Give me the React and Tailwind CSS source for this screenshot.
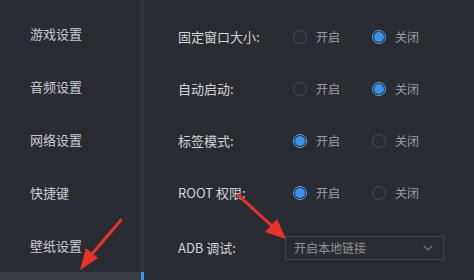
import React from "react";

const font = { fontFamily: '"Noto Sans CJK SC", "Noto Sans", sans-serif' };

function Radio({ checked }) {
  if (checked) {
    return (
      <span className="flex h-[14px] w-[14px] shrink-0 items-center justify-center rounded-full border border-[#5aa8f2] bg-[#2b2d34]">
        <span className="h-[10px] w-[10px] rounded-full bg-[#3a94ee]" />
      </span>
    );
  }
  return <span className="h-[14px] w-[14px] shrink-0 rounded-full border border-[#4a4d55]" />;
}

function Row({ label, on }) {
  return (
    <div className="flex h-[52px] shrink-0 items-center">
      <div className="w-[115px] text-[13px] text-[#d2d4d8]">{label}</div>
      <div className="flex w-[79px] items-center gap-[9px]">
        <Radio checked={on} />
        <span className="text-[12px] text-[#9b9da3]">开启</span>
      </div>
      <div className="flex items-center gap-[9px]">
        <Radio checked={!on} />
        <span className="text-[12px] text-[#9b9da3]">关闭</span>
      </div>
    </div>
  );
}

export default function App() {
  const items = ["游戏设置", "音频设置", "网络设置", "快捷键", "壁纸设置"];
  return (
    <div className="relative flex h-[280px] w-[474px] overflow-hidden bg-[#2a2c33]" style={font}>
      <div className="flex w-[140px] shrink-0 flex-col pt-[7px]">
        {items.map((t) => (
          <div key={t} className="flex h-[53px] shrink-0 items-center pl-[30px] text-[13px] text-[#c9cbd0]">
            {t}
          </div>
        ))}
        <div className="h-[53px] shrink-0 bg-[#3a3d46]" />
      </div>
      <div className="relative w-[4px] shrink-0 bg-[#33353c]">
        <div className="absolute left-[1px] top-[272px] h-[8px] w-[3px] bg-[#3d96ee]" />
      </div>
      <div className="flex flex-1 flex-col pl-[34px] pt-[11px]">
        <Row label="固定窗口大小:" on={false} />
        <Row label="自动启动:" on={false} />
        <Row label="标签模式:" on={true} />
        <Row label="ROOT 权限:" on={true} />
        <div className="mt-[17px] flex h-[24px] shrink-0 items-center">
          <div className="w-[107px] text-[13px] text-[#d2d4d8]">ADB 调试:</div>
          <div className="flex h-[24px] w-[159px] items-center justify-between border border-[#44464d] pl-[8px] pr-[10px]">
            <span className="text-[12px] text-[#8f9197]">开启本地链接</span>
            <svg width="10" height="6" viewBox="0 0 10 6">
              <path d="M1 1 L5 5 L9 1" fill="none" stroke="#7c7e85" strokeWidth="1.2" />
            </svg>
          </div>
        </div>
      </div>
      <svg className="pointer-events-none absolute left-0 top-0" width="474" height="280" viewBox="0 0 474 280">
        <path d="M121 220 L92 254" stroke="#e8322a" strokeWidth="3" strokeLinecap="round" />
        <polygon points="80,270 86,248 98,258" fill="#e8322a" />
        <path d="M238 195 L272 226" stroke="#e8322a" strokeWidth="3" strokeLinecap="round" />
        <polygon points="286,239 265,232 277,219" fill="#e8322a" />
      </svg>
    </div>
  );
}
